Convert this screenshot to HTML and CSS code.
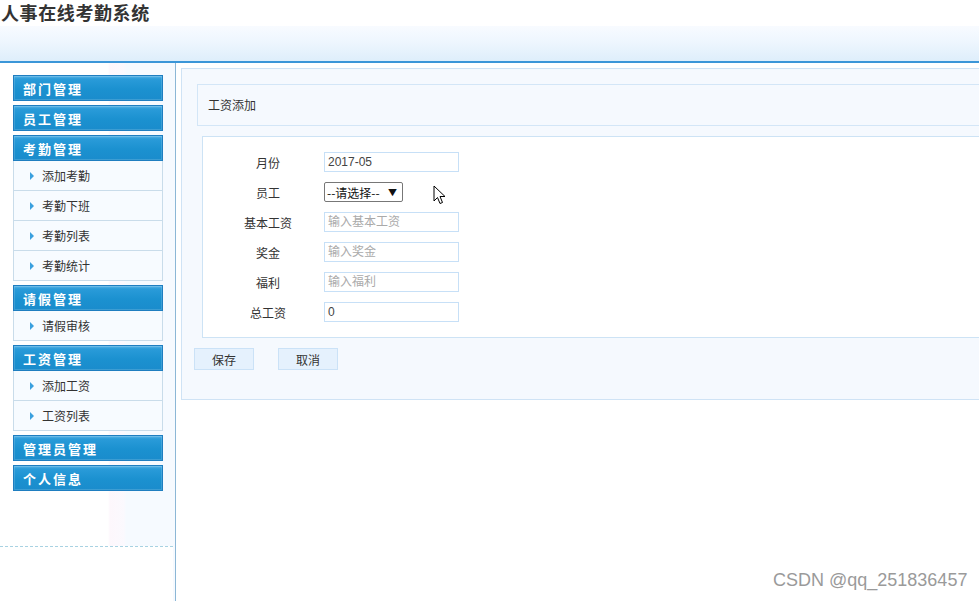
FILE: index.html
```html
<!DOCTYPE html>
<html lang="zh">
<head>
<meta charset="utf-8">
<title>人事在线考勤系统</title>
<link rel="stylesheet" href="styles.css">
</head>
<body>
<div class="top">
  <h1 class="brand">人事在线考勤系统</h1>
  <div class="band"></div>
</div>
<div class="layout">
  <aside class="sidebar">
    <nav class="menu">
      <div class="group"><div class="group-title">部门管理</div></div>
      <div class="group"><div class="group-title">员工管理</div></div>
      <div class="group">
        <div class="group-title">考勤管理</div>
        <ul class="sub">
          <li><span class="tri"></span>添加考勤</li>
          <li><span class="tri"></span>考勤下班</li>
          <li><span class="tri"></span>考勤列表</li>
          <li><span class="tri"></span>考勤统计</li>
        </ul>
      </div>
      <div class="group">
        <div class="group-title">请假管理</div>
        <ul class="sub">
          <li><span class="tri"></span>请假审核</li>
        </ul>
      </div>
      <div class="group">
        <div class="group-title">工资管理</div>
        <ul class="sub">
          <li><span class="tri"></span>添加工资</li>
          <li><span class="tri"></span>工资列表</li>
        </ul>
      </div>
      <div class="group"><div class="group-title">管理员管理</div></div>
      <div class="group"><div class="group-title">个人信息</div></div>
    </nav>
    <div class="side-foot"></div>
  </aside>
  <main class="content">
    <section class="panel">
      <div class="panel-title">工资添加</div>
      <div class="form-box">
        <div class="row"><label>月份</label><div class="field">2017-05</div></div>
        <div class="row"><label>员工</label><div class="select"><span>--请选择--</span><span class="arrow">▼</span></div></div>
        <div class="row"><label>基本工资</label><div class="field ph">输入基本工资</div></div>
        <div class="row"><label>奖金</label><div class="field ph">输入奖金</div></div>
        <div class="row"><label>福利</label><div class="field ph">输入福利</div></div>
        <div class="row"><label>总工资</label><div class="field">0</div></div>
      </div>
      <div class="actions">
        <button class="btn">保存</button>
        <button class="btn">取消</button>
      </div>
    </section>
  </main>
</div>
<svg class="cursor" width="14" height="22" viewBox="0 0 14 22"><path d="M1 1 L1 16 L4.5 12.5 L7 18.5 L9.5 17.5 L7 11.5 L12 11.5 Z" fill="#fff" stroke="#000" stroke-width="1"/></svg>
<div class="watermark">CSDN @qq_251836457</div>
</body>
</html>
```

FILE: styles.css
```css
* { box-sizing: border-box; }
html, body { margin: 0; padding: 0; }
body {
  width: 979px;
  height: 601px;
  overflow: hidden;
  position: relative;
  background: #fff;
  font-family: "Liberation Sans", Arial, "Noto Sans CJK SC", sans-serif;
  font-size: 12px;
  color: #333;
}
.top { height: 63px; }
.brand {
  margin: 0;
  height: 26px;
  padding: 1px 0 0 1px;
  font-size: 18px;
  line-height: 22px;
  font-weight: bold;
  letter-spacing: 0.6px;
  color: #333;
  font-family: "Noto Sans CJK SC", sans-serif;
}
.band {
  height: 37px;
  background: linear-gradient(#f8fbff 0%, #eef6fe 45%, #deeefb 100%);
  border-bottom: 2px solid #3b96d8;
}
.layout { display: flex; height: 538px; }
.sidebar {
  width: 176px;
  flex: none;
  border-right: 1px solid #8cb7d6;
  background: linear-gradient(to right, #fff 0, #fff 108px, #fdf7fc 110px, #fbf9fe 124px, #f6faff 126px, #f6faff 100%);
  display: flex;
  flex-direction: column;
}
.menu {
  padding: 12px 0 0 13px;
  height: 483px;
}
.side-foot {
  border-top: 1px dashed #a8d2e2;
  margin-right: 2px;
  flex: 1;
  background: #fff;
}
.group { width: 150px; margin-bottom: 4px; }
.group-title {
  height: 26px;
  border: 1px solid #1f7ec0;
  background: linear-gradient(#5bb4e6 0%, #2a9bd9 12%, #1b91d0 55%, #1a8ccc 100%);
  box-shadow: inset 0 0 0 1px rgba(255,255,255,0.15);
  color: #fff;
  font-weight: bold;
  font-size: 13px;
  line-height: 26px;
  padding-left: 9px;
  letter-spacing: 2px;
  font-family: "Noto Sans CJK SC", sans-serif;
}
.sub {
  list-style: none;
  margin: 0;
  padding: 0;
  border-left: 1px solid #c9dcea;
  border-right: 1px solid #c9dcea;
  background: #f7fbff;
}
.sub li {
  height: 30px;
  border-bottom: 1px solid #c9dcea;
  display: flex;
  align-items: center;
  padding-left: 16px;
  font-size: 12px;
  color: #333;
  font-family: "Noto Sans CJK SC", sans-serif;
}
.tri {
  width: 0; height: 0;
  border-top: 4px solid transparent;
  border-bottom: 4px solid transparent;
  border-left: 4px solid #3aa0de;
  margin-right: 8px;
}
.content { flex: 1; overflow: hidden; padding: 5px 0 0 5px; }
.panel {
  width: 820px;
  height: 332px;
  background: #f5f9fe;
  border: 1px solid #cfe3f5;
  padding: 15px 0 0 0;
}
.panel-title {
  margin-left: 15px;
  height: 42px;
  border: 1px solid #d3e6f7;
  background: #f5f9fe;
  padding-left: 10px;
  line-height: 40px;
  font-family: "Noto Sans CJK SC", sans-serif;
}
.form-box {
  margin: 10px 0 0 20px;
  height: 202px;
  background: #fff;
  border: 1px solid #cde3f5;
  padding: 15px 0 0 30px;
  display: flex;
  flex-direction: column;
  gap: 10px;
}
.row { display: flex; align-items: center; height: 20px; }
.row label {
  width: 70px;
  text-align: center;
  margin-right: 21px;
  font-family: "Noto Sans CJK SC", sans-serif;
}
.field {
  width: 135px;
  height: 20px;
  border: 1px solid #c7e0f7;
  padding-left: 3px;
  line-height: 18px;
  color: #444;
  font-family: "Liberation Sans", Arial, "Noto Sans CJK SC", sans-serif;
}
.field.ph { color: #aaa; }
.select {
  width: 79px;
  height: 20px;
  border: 1px solid #777;
  border-radius: 2px;
  background: #fff;
  display: flex;
  align-items: center;
  justify-content: space-between;
  padding: 0 5px 0 2px;
  color: #111;
  font-family: "Noto Sans CJK SC", sans-serif;
}
.select .arrow { font-size: 9px; }
.actions { margin: 10px 0 0 12px; display: flex; gap: 24px; }
.btn {
  width: 60px;
  height: 22px;
  background: #e5f1fd;
  border: 1px solid #cbe2f7;
  color: #333;
  font-size: 12px;
  font-family: "Noto Sans CJK SC", sans-serif;
  padding: 0;
  cursor: pointer;
}
.cursor { position: absolute; left: 433px; top: 185px; }
.watermark {
  position: absolute;
  left: 773px;
  top: 570px;
  font-size: 18px;
  color: #9a9a9a;
  font-family: "Liberation Sans", Arial, sans-serif;
  white-space: nowrap;
}
```
